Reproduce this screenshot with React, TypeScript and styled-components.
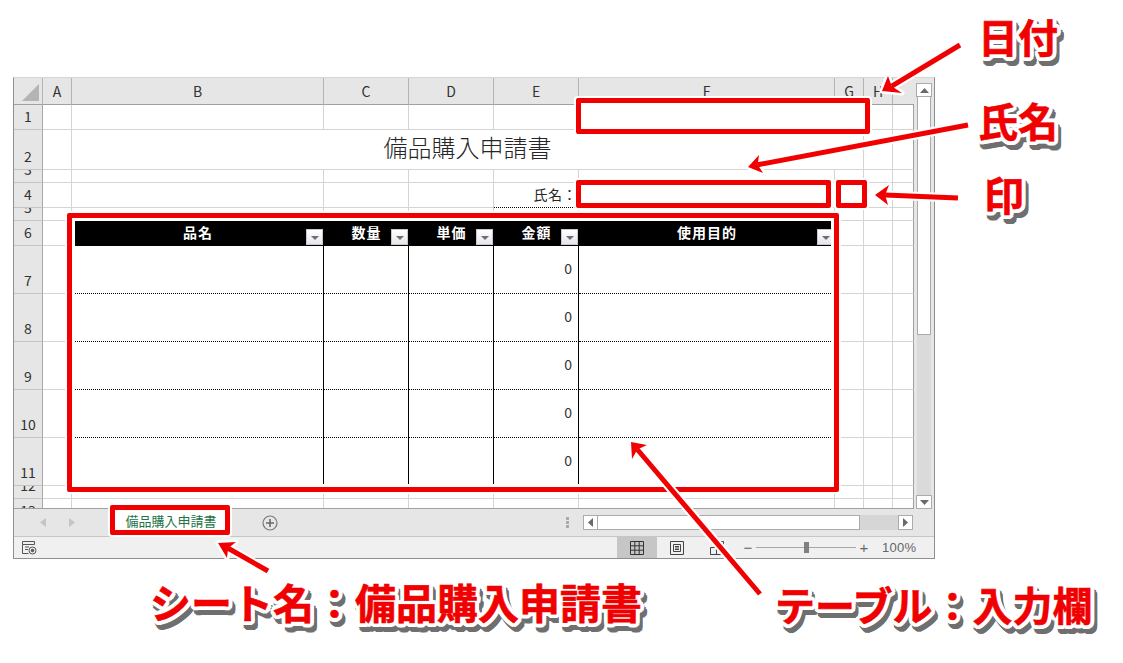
import React from 'react';
import styled, { createGlobalStyle } from 'styled-components';

const COLUMNS = [
  { name: 'A', width: 29 },
  { name: 'B', width: 252 },
  { name: 'C', width: 85 },
  { name: 'D', width: 85 },
  { name: 'E', width: 85 },
  { name: 'F', width: 256 },
  { name: 'G', width: 29 },
  { name: 'H', width: 29 },
  { name: '', width: 21 },
];
const ROWS = [25, 40, 13, 25, 13, 25, 48, 48, 48, 48, 48, 13, 25];
const TABLE_HEAD = ['品名', '数量', '単価', '金額', '使用目的'];

const ring = (x: number, y: number, r: number, color: string) =>
  Array.from({ length: 16 }, (_, i) => {
    const a = (i / 16) * Math.PI * 2;
    return `${(x + Math.cos(a) * r).toFixed(1)}px ${(y + Math.sin(a) * r).toFixed(1)}px 0 ${color}`;
  }).join(', ');

const LABEL_SHADOW = `${ring(0, 0, 2, '#fff')}, ${ring(0, 0, 4, '#fff')}, ${ring(3, 5, 2, '#6f6f6f')}, ${ring(3, 5, 4, '#6f6f6f')}`;

const ARROWS = [
  { tail: [960, 45], tip: [882, 91], a: [888, 76], b: [902, 93] },
  { tail: [968, 125], tip: [748, 167], a: [759, 155], b: [763, 173] },
  { tail: [958, 198], tip: [875, 195], a: [889, 185], b: [888, 205] },
  { tail: [268, 571], tip: [218, 543], a: [236, 542], b: [227, 558] },
  { tail: [760, 594], tip: [631, 442], a: [647, 445], b: [632, 459] },
];

const GlobalStyle = createGlobalStyle`
  html, body {
    margin: 0;
    background: #ffffff;
  }
  body {
    font-family: "Noto Sans CJK JP", "Liberation Sans", sans-serif;
  }
`;

const Arrow: React.FC<{ tail: number[]; tip: number[]; a: number[]; b: number[] }> = ({ tail, tip, a, b }) => {
  const nx = tip[0] + ((a[0] + b[0]) / 2 - tip[0]) * 0.75;
  const ny = tip[1] + ((a[1] + b[1]) / 2 - tip[1]) * 0.75;
  const head = `${tip[0]},${tip[1]} ${a[0]},${a[1]} ${nx},${ny} ${b[0]},${b[1]}`;
  const shaft = `M${tail[0]} ${tail[1]}L${nx} ${ny}`;
  return (
    <g>
      <path d={shaft} stroke="#fff" strokeWidth="9" fill="none" />
      <polygon points={head} fill="#fff" stroke="#fff" strokeWidth="5" strokeLinejoin="round" />
      <path d={shaft} stroke="#f00000" strokeWidth="5" fill="none" />
      <polygon points={head} fill="#f00000" />
    </g>
  );
};

const App: React.FC = () => {
  const cells: React.ReactNode[] = [];

  ROWS.forEach((_, r) => {
    const row = r + 1;
    cells.push(<RowHeader key={`h${row}`}>{row}</RowHeader>);

    if (row === 2) {
      cells.push(<Cell key="a2" />);
      cells.push(<TitleCell key="title">備品購入申請書</TitleCell>);
      cells.push(<Cell key="h2" />);
      cells.push(<Cell key="i2" $edge />);
      return;
    }

    COLUMNS.forEach((col, c) => {
      const key = `${col.name || 'I'}${row}`;
      const inTable = row >= 6 && row <= 11 && c >= 1 && c <= 5;
      if (inTable && row === 6) {
        cells.push(
          <TableHead key={key}>
            {TABLE_HEAD[c - 1]}
            <FilterButton>
              <FilterCaret />
            </FilterButton>
          </TableHead>,
        );
      } else if (inTable) {
        cells.push(
          <TableCell key={key} $last={c === 5} $end={row === 11}>
            {c === 4 ? '0' : ''}
          </TableCell>,
        );
      } else if (row === 4 && c === 4) {
        cells.push(<NameLabel key={key}>氏名：</NameLabel>);
      } else {
        cells.push(<Cell key={key} $edge={c === COLUMNS.length - 1} />);
      }
    });
  });

  return (
    <Page>
      <GlobalStyle />
      <ExcelWindow>
        <SheetRow>
          <SheetPane>
            <Grid>
              <Corner>
                <svg width="29" height="26" viewBox="0 0 29 26">
                  <polygon points="8,23 25,6 25,23" fill="#b4b4b4" />
                </svg>
              </Corner>
              {COLUMNS.map((col) => (
                <ColHeader key={col.name || 'I'} $open={!col.name}>
                  {col.name}
                </ColHeader>
              ))}
              {cells}
            </Grid>
          </SheetPane>
          <VScroll>
            <ScrollButton>
              <svg width="9" height="5" viewBox="0 0 9 5">
                <polygon points="4.5,0 9,5 0,5" fill="#6a6a6a" />
              </svg>
            </ScrollButton>
            <VThumb />
            <VTrack />
            <ScrollButton>
              <svg width="9" height="5" viewBox="0 0 9 5">
                <polygon points="0,0 9,0 4.5,5" fill="#6a6a6a" />
              </svg>
            </ScrollButton>
          </VScroll>
        </SheetRow>

        <TabBar>
          <TabNav>
            <svg width="6" height="9" viewBox="0 0 6 9">
              <polygon points="6,0 6,9 0,4.5" fill="#c4c4c4" />
            </svg>
            <svg width="6" height="9" viewBox="0 0 6 9">
              <polygon points="0,0 0,9 6,4.5" fill="#c4c4c4" />
            </svg>
          </TabNav>
          <SheetTab />
          <AddSheet>
            <svg width="16" height="16" viewBox="0 0 16 16">
              <circle cx="8" cy="8" r="7" fill="none" stroke="#7a7a7a" strokeWidth="1.2" />
              <path d="M8 4v8M4 8h8" stroke="#6a6a6a" strokeWidth="1.6" />
            </svg>
          </AddSheet>
          <SplitDots />
          <HScroll>
            <HButton>
              <svg width="5" height="9" viewBox="0 0 5 9">
                <polygon points="5,0 5,9 0,4.5" fill="#6a6a6a" />
              </svg>
            </HButton>
            <HThumb />
            <HTrack />
            <HButton>
              <svg width="5" height="9" viewBox="0 0 5 9">
                <polygon points="0,0 0,9 5,4.5" fill="#6a6a6a" />
              </svg>
            </HButton>
          </HScroll>
        </TabBar>

        <StatusBar>
          <MacroIcon>
            <svg width="15" height="14" viewBox="0 0 15 14" fill="none" stroke="#555" strokeWidth="1">
              <path d="M.5 .5h12v3H.5zM.5 3.5v9h6M3 6h4M3 8.5h3" />
              <circle cx="10.5" cy="9.5" r="3.5" />
              <circle cx="10.5" cy="9.5" r="1.3" fill="#555" />
            </svg>
          </MacroIcon>
          <ViewButton $active>
            <svg width="14" height="14" viewBox="0 0 14 14" fill="none" stroke="#333" strokeWidth="1">
              <path d="M.5 .5h13v13H.5zM4.8 .5v13M9.2 .5v13M.5 4.8h13M.5 9.2h13" />
            </svg>
          </ViewButton>
          <ViewButton>
            <svg width="14" height="14" viewBox="0 0 14 14" fill="none" stroke="#444" strokeWidth="1">
              <path d="M.5 .5h13v13H.5zM3.5 3.5h7v7h-7zM5 5.5h4M5 7h4M5 8.5h4" />
            </svg>
          </ViewButton>
          <ViewButton>
            <svg width="14" height="14" viewBox="0 0 14 14" fill="none" stroke="#444" strokeWidth="1">
              <path d="M.5 6.5h6v7H.5zM.5 13.5h13M9 .5h4.5v5" />
            </svg>
          </ViewButton>
          <ZoomGroup>
            <ZoomSign>−</ZoomSign>
            <ZoomSlider>
              <ZoomThumb />
            </ZoomSlider>
            <ZoomSign>+</ZoomSign>
            <ZoomValue>100%</ZoomValue>
          </ZoomGroup>
        </StatusBar>
      </ExcelWindow>

      <Frame $x={67} $y={213} $w={772} $h={279} />
      <Frame $x={576} $y={98} $w={294} $h={36} $filled />
      <Frame $x={576} $y={180} $w={255} $h={28} $filled />
      <Frame $x={836} $y={180} $w={31} $h={28} $filled />
      <TabFrame>備品購入申請書</TabFrame>

      <ArrowLayer width="1123" height="663" viewBox="0 0 1123 663">
        {ARROWS.map((arrow) => (
          <Arrow key={arrow.tail.join()} {...arrow} />
        ))}
      </ArrowLayer>

      <Callout $x={978} $y={8}>日付</Callout>
      <Callout $x={978} $y={92}>氏名</Callout>
      <Callout $x={984} $y={166}>印</Callout>
      <Callout $x={150} $y={573} $size={41}>シート名：備品購入申請書</Callout>
      <Callout $x={775} $y={576}>テーブル：入力欄</Callout>
    </Page>
  );
};

const Page = styled.div`
  position: relative;
  width: 1123px;
  height: 663px;
  padding: 77px 0 0 13px;
  box-sizing: border-box;
  overflow: hidden;
  background: #ffffff;
`;

const ExcelWindow = styled.div`
  width: 922px;
  height: 482px;
  box-sizing: border-box;
  display: flex;
  flex-direction: column;
  border: 1px solid #8f8f8f;
  border-top-color: #d6d6d6;
  background: #e6e6e6;
`;

const SheetRow = styled.div`
  display: flex;
  height: 431px;
`;

const SheetPane = styled.div`
  width: 900px;
  height: 431px;
  box-sizing: border-box;
  overflow: hidden;
  background: #ffffff;
  border-bottom: 1px solid #a0a0a0;
`;

const Grid = styled.div`
  display: grid;
  grid-template-columns: 29px ${COLUMNS.map((c) => `${c.width}px`).join(' ')};
  grid-template-rows: 27px ${ROWS.map((h) => `${h}px`).join(' ')};
`;

const Corner = styled.div`
  background: #e6e6e6;
  border-right: 1px solid #b4b4b4;
  border-bottom: 1px solid #a0a0a0;
  box-sizing: border-box;
`;

const ColHeader = styled.div<{ $open?: boolean }>`
  box-sizing: border-box;
  display: flex;
  align-items: center;
  justify-content: center;
  font-size: 14px;
  color: #333333;
  background: #e6e6e6;
  border-right: ${(p) => (p.$open ? 'none' : '1px solid #b4b4b4')};
  border-bottom: 1px solid #a0a0a0;
`;

const RowHeader = styled.div`
  box-sizing: border-box;
  display: flex;
  align-items: flex-end;
  justify-content: center;
  padding-bottom: 3px;
  overflow: hidden;
  font-size: 14px;
  line-height: 20px;
  color: #333333;
  background: #e6e6e6;
  border-right: 1px solid #a8a8a8;
  border-bottom: 1px solid #c4c4c4;
`;

const Cell = styled.div<{ $edge?: boolean }>`
  box-sizing: border-box;
  background: #ffffff;
  border-right: 1px solid ${(p) => (p.$edge ? '#a0a0a0' : '#d4d4d4')};
  border-bottom: 1px solid #d4d4d4;
`;

const TitleCell = styled(Cell)`
  grid-column: span 6;
  display: flex;
  align-items: flex-end;
  justify-content: center;
  padding-bottom: 4px;
  font-size: 24px;
  line-height: 36px;
  font-weight: 300;
  color: #262626;
`;

const NameLabel = styled(Cell)`
  display: flex;
  align-items: flex-end;
  justify-content: flex-end;
  padding: 0 1px 2px 0;
  font-size: 14px;
  line-height: 22px;
  letter-spacing: 0.5px;
  color: #262626;
  border-bottom: 1px dotted #000000;
`;

const TableHead = styled.div`
  position: relative;
  display: flex;
  align-items: center;
  justify-content: center;
  padding-bottom: 4px;
  box-sizing: border-box;
  font-size: 14px;
  font-weight: 700;
  letter-spacing: 1px;
  color: #ffffff;
  background: #000000;
`;

const FilterButton = styled.span`
  position: absolute;
  right: 1px;
  bottom: 1px;
  width: 17px;
  height: 16px;
  box-sizing: border-box;
  display: flex;
  align-items: center;
  justify-content: center;
  border: 1px solid #c8c8c8;
  background: linear-gradient(#ffffff, #e4e6ee);
`;

const FilterCaret = styled.i`
  width: 0;
  height: 0;
  margin-top: 2px;
  border-left: 4px solid transparent;
  border-right: 4px solid transparent;
  border-top: 4px solid #6f6f6f;
`;

const TableCell = styled.div<{ $last?: boolean; $end?: boolean }>`
  box-sizing: border-box;
  display: flex;
  align-items: center;
  justify-content: flex-end;
  padding: 0 6px 4px 0;
  font-size: 14px;
  color: #333333;
  background: #ffffff;
  border-right: ${(p) => (p.$last ? 'none' : '1px solid #000000')};
  border-bottom: ${(p) => (p.$end ? 'none' : '1px dotted #000000')};
`;

const VScroll = styled.div`
  width: 20px;
  height: 431px;
  box-sizing: border-box;
  padding: 5px 2px 0;
  display: flex;
  flex-direction: column;
  background: #e6e6e6;
`;

const ScrollButton = styled.div`
  height: 14px;
  flex: none;
  box-sizing: border-box;
  display: flex;
  align-items: center;
  justify-content: center;
  background: #ffffff;
  border: 1px solid #ababab;
`;

const VThumb = styled.div`
  height: 238px;
  flex: none;
  box-sizing: border-box;
  margin: 0 1px;
  background: #ffffff;
  border: 1px solid #ababab;
  border-top: none;
`;

const VTrack = styled.div`
  flex: 1;
  margin: 0 1px;
  background: #dadada;
`;

const TabBar = styled.div`
  height: 28px;
  flex: none;
  box-sizing: border-box;
  display: flex;
  align-items: center;
  background: #e6e6e6;
  border-bottom: 1px solid #c6c6c6;
`;

const TabNav = styled.div`
  width: 96px;
  box-sizing: border-box;
  padding-left: 26px;
  display: flex;
  gap: 23px;
  flex: none;
`;

const SheetTab = styled.div`
  width: 120px;
  flex: none;
`;

const AddSheet = styled.div`
  margin-left: 32px;
  display: flex;
  flex: none;
`;

const SplitDots = styled.div`
  width: 3px;
  height: 12px;
  margin-left: 288px;
  flex: none;
  background: radial-gradient(circle at 1.5px 1.5px, #a8a8a8 1.4px, transparent 1.5px) 0 0 / 3px 4px repeat-y;
`;

const HScroll = styled.div`
  width: 330px;
  height: 15px;
  margin-left: 14px;
  flex: none;
  display: flex;
`;

const HButton = styled.div`
  width: 15px;
  flex: none;
  box-sizing: border-box;
  display: flex;
  align-items: center;
  justify-content: center;
  background: #ffffff;
  border: 1px solid #ababab;
`;

const HThumb = styled.div`
  width: 262px;
  flex: none;
  box-sizing: border-box;
  background: #ffffff;
  border: 1px solid #ababab;
  border-left: none;
`;

const HTrack = styled.div`
  flex: 1;
  background: #d6d6d6;
`;

const StatusBar = styled.div`
  flex: 1;
  display: flex;
  align-items: stretch;
  background: #f0f0f0;
`;

const MacroIcon = styled.div`
  width: 603px;
  flex: none;
  box-sizing: border-box;
  padding-left: 8px;
  display: flex;
  align-items: center;
`;

const ViewButton = styled.div<{ $active?: boolean }>`
  width: 40px;
  flex: none;
  display: flex;
  align-items: center;
  justify-content: center;
  background: ${(p) => (p.$active ? '#c6c6c6' : 'transparent')};
`;

const ZoomGroup = styled.div`
  margin-left: 4px;
  display: flex;
  align-items: center;
  color: #666666;
`;

const ZoomSign = styled.span`
  width: 14px;
  text-align: center;
  font-family: "Liberation Sans", sans-serif;
  font-size: 15px;
`;

const ZoomSlider = styled.div`
  position: relative;
  width: 100px;
  height: 1px;
  margin: 0 1px;
  background: #a8a8a8;
`;

const ZoomThumb = styled.span`
  position: absolute;
  left: 48px;
  top: -5px;
  width: 5px;
  height: 11px;
  background: #808080;
`;

const ZoomValue = styled.span`
  margin-left: 11px;
  font-family: "Liberation Sans", sans-serif;
  font-size: 13px;
  letter-spacing: 0.3px;
`;

const Frame = styled.div<{ $x: number; $y: number; $w: number; $h: number; $filled?: boolean }>`
  position: absolute;
  left: ${(p) => p.$x}px;
  top: ${(p) => p.$y}px;
  width: ${(p) => p.$w}px;
  height: ${(p) => p.$h}px;
  box-sizing: border-box;
  border: 5px solid #f00000;
  border-radius: 2px;
  background: ${(p) => (p.$filled ? '#ffffff' : 'transparent')};
  box-shadow: 0 0 0 2px #ffffff, inset 0 0 0 3px #ffffff;
`;

const TabFrame = styled.div`
  position: absolute;
  left: 110px;
  top: 505px;
  width: 120px;
  height: 30px;
  box-sizing: border-box;
  padding-left: 2px;
  display: flex;
  align-items: center;
  justify-content: center;
  border: 5px solid #f00000;
  border-radius: 2px;
  background: #ffffff;
  box-shadow: 0 0 0 2px #ffffff;
  font-size: 13px;
  color: #217346;
`;

const ArrowLayer = styled.svg`
  position: absolute;
  left: 0;
  top: 0;
  pointer-events: none;
`;

const Callout = styled.div<{ $x: number; $y: number; $size?: number }>`
  position: absolute;
  left: ${(p) => p.$x}px;
  top: ${(p) => p.$y}px;
  font-size: ${(p) => p.$size ?? 40}px;
  line-height: 56px;
  font-weight: 700;
  white-space: nowrap;
  color: #f00000;
  -webkit-text-stroke: 0.6px #f00000;
  text-shadow: ${LABEL_SHADOW};
`;

export default App;
